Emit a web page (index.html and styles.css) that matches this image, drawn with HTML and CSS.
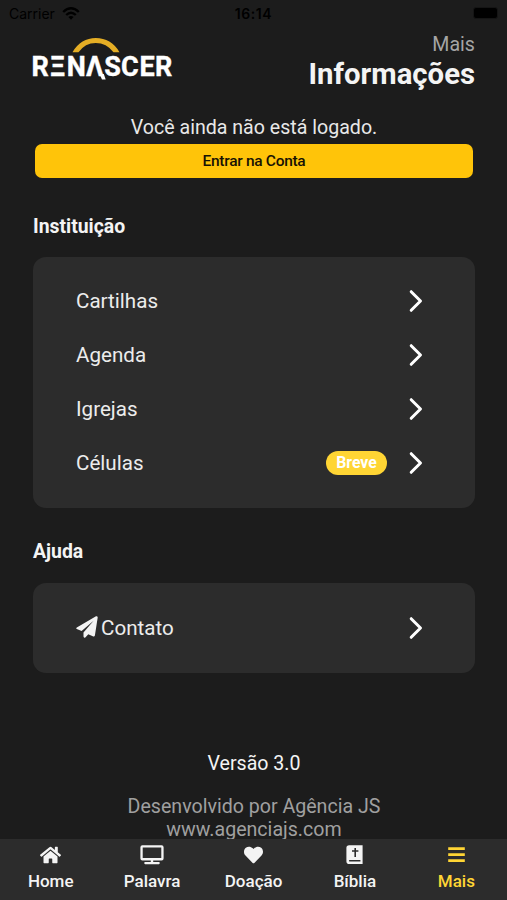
FILE: index.html
```
<!DOCTYPE html>
<html lang="pt-BR">
<head>
    <meta charset="utf-8">
    <title>Renascer</title>
    <link rel="stylesheet" href="styles.css">
</head>
<body>
    <div class="status-bar">
        <div class="carrier">
            <span>Carrier</span>
            <svg class="wifi" viewBox="0 0 18 13">
                <path d="M1.2 5 Q9 -2.4 16.8 5 M4.2 8 Q9 3.4 13.8 8" />
                <path class="wifi-dot" d="M6.4 10 Q9 7.8 11.6 10 L9 12.8 Z" />
            </svg>
        </div>
        <div class="clock">16:14</div>
        <div class="battery-side"><div class="battery"></div></div>
    </div>

    <main class="content">
        <header class="header">
            <svg class="logo" viewBox="0 0 142 44" aria-label="Renascer">
                <path class="logo-arc" d="M39.5 15.2 Q48 1.1 62.8 1.1 Q78 1.1 86.5 15.2 L80.5 15.2 Q73.5 5.9 62.8 5.9 Q52 5.9 45.5 15.2 Z" />
                <text class="logo-text" y="38.8"><tspan x="-1.4">R</tspan><tspan x="17">Ξ</tspan><tspan x="33.8">N</tspan><tspan x="52.9">Λ</tspan><tspan x="71.3">S</tspan><tspan x="87.9">C</tspan><tspan x="106.4">E</tspan><tspan x="121.9">R</tspan></text>
                <path class="logo-leg" d="M66.5 37 L70.8 37 L72.7 42.5 L69 42.5 Z" />
            </svg>
            <div class="heading">
                <div class="subtitle">Mais</div>
                <h1 class="title">Informações</h1>
            </div>
        </header>

        <p class="login-text">Você ainda não está logado.</p>
        <button class="login-button">Entrar na Conta</button>

        <h2 class="section-title">Instituição</h2>
        <div class="card">
            <div class="row">
                <span>Cartilhas</span>
                <svg class="chevron" viewBox="0 0 14 24"><path d="M2.2 2.7 L11.5 12 L2.2 21.3" /></svg>
            </div>
            <div class="row">
                <span>Agenda</span>
                <svg class="chevron" viewBox="0 0 14 24"><path d="M2.2 2.7 L11.5 12 L2.2 21.3" /></svg>
            </div>
            <div class="row">
                <span>Igrejas</span>
                <svg class="chevron" viewBox="0 0 14 24"><path d="M2.2 2.7 L11.5 12 L2.2 21.3" /></svg>
            </div>
            <div class="row">
                <span>Células</span>
                <span class="badge">Breve</span>
                <svg class="chevron" viewBox="0 0 14 24"><path d="M2.2 2.7 L11.5 12 L2.2 21.3" /></svg>
            </div>
        </div>

        <h2 class="section-title help">Ajuda</h2>
        <div class="card">
            <div class="row">
                <svg class="plane" viewBox="0 0 22 22"><path d="M20 .3 L.8 11.4 Q-.3 12.2 .8 13.1 L5.6 15.1 L17.6 4.7 L7.5 16.4 V20.6 Q7.8 22.2 9.3 21.4 L12.3 18.3 L17.3 20.4 Q18.5 20.7 18.9 19.5 L21.7 1.4 Q21.5 -.2 20 .3 Z" /></svg>
                <span>Contato</span>
                <svg class="chevron" viewBox="0 0 14 24"><path d="M2.2 2.7 L11.5 12 L2.2 21.3" /></svg>
            </div>
        </div>

        <footer class="footer">
            <p class="version">Versão 3.0</p>
            <p class="credits">Desenvolvido por Agência JS<br>www.agenciajs.com</p>
        </footer>
    </main>

    <nav class="tabs">
        <div class="tab">
            <svg viewBox="0 0 576 512" width="21" height="20"><path d="M280.37 148.26L96 300.11V464a16 16 0 0 0 16 16l112.06-.29a16 16 0 0 0 15.92-16V368a16 16 0 0 1 16-16h64a16 16 0 0 1 16 16v95.64a16 16 0 0 0 16 16.05L464 480a16 16 0 0 0 16-16V300L295.67 148.26a12.19 12.19 0 0 0-15.3 0zM571.6 251.47L488 182.56V44.05a12 12 0 0 0-12-12h-56a12 12 0 0 0-12 12v72.61L318.47 43a48 48 0 0 0-61 0L4.34 251.47a12 12 0 0 0-1.6 16.9l25.5 31A12 12 0 0 0 45.15 301l235.22-193.74a12.19 12.19 0 0 1 15.3 0L530.9 301a12 12 0 0 0 16.9-1.6l25.5-31a12 12 0 0 0-1.7-16.93z" /></svg>
            <span>Home</span>
        </div>
        <div class="tab">
            <svg viewBox="0 0 24 20" width="24" height="20"><path fill-rule="evenodd" d="M2.4 .3 H21.6 Q23.6 .3 23.6 2.3 V13.4 Q23.6 15.4 21.6 15.4 H13.2 V17 H18.8 Q19.8 17 19.8 18.1 Q19.8 19.2 18.8 19.2 H5.2 Q4.2 19.2 4.2 18.1 Q4.2 17 5.2 17 H10.8 V15.4 H2.4 Q.4 15.4 .4 13.4 V2.3 Q.4 .3 2.4 .3 Z M2.7 2.6 V13.1 H21.3 V2.6 Z" /></svg>
            <span>Palavra</span>
        </div>
        <div class="tab">
            <svg viewBox="0 0 512 512" width="19" height="19"><path d="M462.3 62.6C407.5 15.9 326 24.3 275.7 76.2L256 96.5l-19.7-20.3C186.1 24.3 104.5 15.9 49.7 62.6c-62.8 53.6-66.1 149.8-9.9 207.9l193.5 199.8c12.5 12.9 32.8 12.9 45.3 0l193.5-199.8c56.3-58.1 53-154.3-9.8-207.9z" /></svg>
            <span>Doação</span>
        </div>
        <div class="tab">
            <svg viewBox="0 0 17 20" width="17" height="20"><path fill-rule="evenodd" d="M3.2 .3 H16.6 V19 H3.2 Q.4 19 .4 16.2 V3.1 Q.4 .3 3.2 .3 Z M8.4 3 V5.2 H6 V6.8 H8.4 V12 H10 V6.8 H12.4 V5.2 H10 V3 Z M3.7 15 Q2.9 15 2.9 15.8 Q2.9 16.6 3.7 16.6 H14.4 V15 Z" /></svg>
            <span>Bíblia</span>
        </div>
        <div class="tab active">
            <svg viewBox="0 0 17 20" width="17" height="20"><path d="M.2 2.2 H16.8 V4.9 H.2 Z M.2 8.2 H16.8 V10.9 H.2 Z M.2 14.2 H16.8 V16.9 H.2 Z" /></svg>
            <span>Mais</span>
        </div>
    </nav>
</body>
</html>
```
FILE: styles.css
```
* {
    box-sizing: border-box;
}

body {
    margin: 0;
    height: 900px;
    display: flex;
    flex-direction: column;
    overflow: hidden;
    background-color: #1c1c1c;
    color: #f4f4f4;
    font-family: Roboto, "Liberation Sans", sans-serif;
}

h1, h2, p {
    margin: 0;
}

/* Phone status bar */
.status-bar {
    display: grid;
    grid-template-columns: 1fr auto 1fr;
    align-items: center;
    height: 28px;
    flex: none;
    padding: 0 9px;
    color: #000;
    font-family: Inter, sans-serif;
    font-size: 14px;
}

.carrier {
    display: flex;
    align-items: center;
    gap: 7px;
    margin-top: -2px;
}

.wifi {
    width: 18px;
    height: 13px;
    fill: none;
    stroke: #000;
    stroke-width: 2.4;
}

.wifi-dot {
    fill: #000;
    stroke: none;
}

.clock {
    margin-top: -2px;
    font-weight: 600;
    letter-spacing: 0.6px;
}

.battery-side {
    display: flex;
    justify-content: flex-end;
}

.battery {
    width: 25px;
    height: 12px;
    margin-top: -2px;
    border: 1px solid #151515;
    border-radius: 3px;
    background-color: #000;
}

.content {
    flex: 1;
    min-height: 0;
    padding: 0 32px 0 33px;
}

/* Logo and page title */
.header {
    display: flex;
    justify-content: space-between;
    padding-top: 5px;
    height: 88px;
}

.logo {
    width: 142px;
    height: 44px;
    margin-top: 4px;
    overflow: visible;
}

.logo-arc {
    fill: #e5ae25;
}

.logo-text {
    fill: #fff;
    stroke: #fff;
    stroke-width: 0.4;
    font-size: 27px;
    font-weight: 700;
}

.logo-leg {
    fill: #fff;
}

.heading {
    text-align: right;
}

.subtitle {
    color: #a5a5a5;
    font-size: 19.6px;
    line-height: 24px;
}

.title {
    font-size: 29.3px;
    line-height: 34px;
    font-weight: 700;
}

.login-text {
    font-size: 19.6px;
    line-height: 23px;
    text-align: center;
    color: #e8e8e8;
}

.login-button {
    display: block;
    width: calc(100% - 4px);
    height: 34px;
    margin: 4.5px 2px 0;
    padding: 0;
    border: none;
    border-radius: 7px;
    background-color: #ffc409;
    color: #161204;
    font-family: inherit;
    font-size: 15.5px;
    font-weight: 500;
    letter-spacing: -0.3px;
}

.section-title {
    margin-top: 37px;
    font-size: 19.4px;
    line-height: 24px;
    font-weight: 700;
}

.section-title.help {
    margin-top: 32px;
}

/* Grouped list */
.card {
    margin-top: 18px;
    padding: 18px 52px 18px 43px;
    border-radius: 13px;
    background-color: #2c2c2c;
}

.section-title.help + .card {
    margin-top: 19px;
}

.row {
    display: flex;
    align-items: center;
    height: 53.9px;
    color: #ececec;
    font-size: 20.6px;
}

.chevron {
    width: 14px;
    height: 24px;
    margin-left: auto;
    fill: none;
    stroke: #fff;
    stroke-width: 3;
    stroke-linecap: round;
    stroke-linejoin: round;
}

.badge {
    width: 61px;
    height: 24px;
    margin-left: auto;
    margin-right: 22px;
    border-radius: 12px;
    background-color: #ffd534;
    color: #fff;
    font-size: 15.8px;
    line-height: 24px;
    font-weight: 700;
    text-align: center;
}

.badge + .chevron {
    margin-left: 0;
}

.plane {
    width: 22px;
    height: 22px;
    margin-right: 3px;
    margin-top: -2px;
    fill: #f4f4f4;
}

.footer {
    margin-top: 79px;
    text-align: center;
    font-size: 19.6px;
    line-height: 23px;
}

.credits {
    margin-top: 20px;
    color: #a0a0a0;
}

/* Bottom navigation */
.tabs {
    display: flex;
    flex: none;
    height: 61px;
    background-color: #2c2c2c;
}

.tab {
    flex: 1;
    display: flex;
    flex-direction: column;
    align-items: center;
    padding-top: 6px;
    color: #f4f4f4;
    font-size: 17px;
    font-weight: 500;
}

.tab svg {
    height: 20px;
    fill: currentColor;
}

.tab span {
    margin-top: 5px;
    line-height: 22px;
}

.tab.active {
    color: #ffd534;
}
```
